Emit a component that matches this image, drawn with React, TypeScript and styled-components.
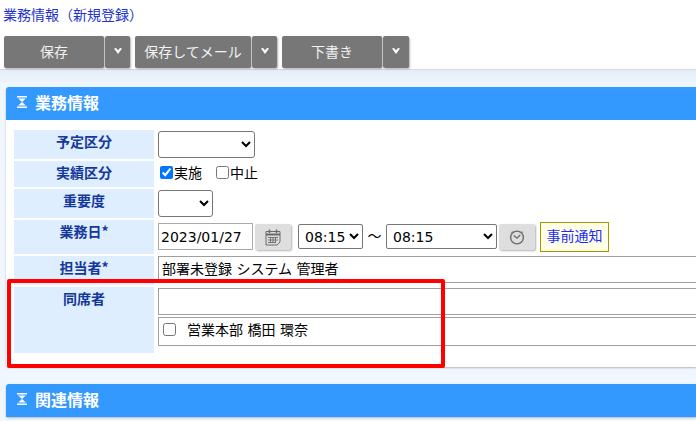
import React from "react";
import styled, { createGlobalStyle } from "styled-components";

const UI_FONT = `"DejaVu Sans", "Noto Sans CJK JP", sans-serif`;
const CJK_FONT = `"Noto Sans CJK JP", "Noto Sans", sans-serif`;

const Global = createGlobalStyle`
  html, body { margin: 0; padding: 0; background: #fff; }
  body { font-family: ${UI_FONT}; font-size: 14px; color: #000; overflow: hidden; }
  * { box-sizing: border-box; }
`;

const Page = styled.div`
  position: relative;
  width: 696px;
  height: 421px;
  overflow: hidden;
  display: flex;
  flex-direction: column;
`;
const Header = styled.header`
  height: 70px;
  flex: none;
  background: #fff;
  border-bottom: 1px solid #d8d8d8;
  padding: 4px 0 0 3px;
`;
const Crumb = styled.div`
  font-family: ${CJK_FONT};
  font-size: 14px;
  line-height: 20px;
  color: #2233cc;
  height: 32px;
`;
const Toolbar = styled.div`
  display: flex;
  gap: 5px;
  padding-left: 1px;
`;
const ButtonGroup = styled.div`
  display: flex;
  gap: 1px;
`;
const ToolButton = styled.button<{ $w: number }>`
  width: ${(p) => p.$w}px;
  height: 32px;
  border: 0;
  padding: 0 0 3px;
  border-radius: 2px;
  background: #777;
  color: #f2f2f2;
  font: 14px ${CJK_FONT};
  box-shadow: 1px 1px 2px rgba(0, 0, 0, 0.3);
  display: flex;
  align-items: center;
  justify-content: center;
`;
const Main = styled.main`
  flex: 1;
  background: linear-gradient(#e4edf7, #eff6fe 14px);
  padding: 17px 0 0 6px;
  display: flex;
  flex-direction: column;
  gap: 17px;
`;
const Panel = styled.section`
  background: #fff;
  border-radius: 3px 0 0 3px;
  box-shadow: 0 1px 2px rgba(0, 0, 0, 0.25);
`;
const PanelTitle = styled.h2`
  margin: 0;
  height: 33px;
  background: #3399ff;
  border-radius: 3px 0 0 0;
  color: #fff;
  font-family: ${CJK_FONT};
  font-size: 16px;
  font-weight: 700;
  display: flex;
  align-items: center;
  gap: 8px;
  padding: 0 0 4px 11px;
`;
const Form = styled.div`
  padding: 10px 0 14px 8px;
  display: flex;
  flex-direction: column;
  gap: 2px;
`;
const Row = styled.div<{ $h: number }>`
  display: flex;
  height: ${(p) => p.$h}px;
`;
const Label = styled.div`
  width: 140px;
  flex: none;
  background: #deeeff;
  color: #14389a;
  font-family: ${CJK_FONT};
  font-size: 14px;
  font-weight: 700;
  line-height: 20px;
  padding-top: 1px;
  text-align: center;
`;
const Value = styled.div`
  flex: 1;
  min-width: 0;
  padding-left: 4px;
  display: flex;
  align-items: flex-start;
`;
const Select = styled.select<{ $w: number }>`
  width: ${(p) => p.$w}px;
  height: 27px;
  margin-top: 1px;
  font: 14px ${UI_FONT};
  background: #fff;
  border: 1px solid #767676;
  border-radius: 3px;
  padding: 0 0 0 2px;
  color: #000;
`;
const Check = styled.label`
  display: flex;
  align-items: center;
  font-family: ${CJK_FONT};
  line-height: 20px;
  margin: 1px 12px 0 0;
  input { margin: 0 1px 0 2px; width: 13px; height: 13px; }
`;
const DateInput = styled.input`
  width: 95px;
  height: 27px;
  margin-top: 3px;
  border: 1px solid #aaa;
  padding: 0 2px;
  font: 14px ${UI_FONT};
`;
const IconButton = styled.button<{ $gap: number }>`
  width: 36px;
  height: 26px;
  margin: 4px 0 0 ${(p) => p.$gap}px;
  padding: 0;
  border: 0;
  border-radius: 2px;
  background: #dedede;
  box-shadow: 1px 1px 2px rgba(0, 0, 0, 0.3);
  display: flex;
  align-items: center;
  justify-content: center;
`;
const TimeSelect = styled(Select)<{ $gap?: number }>`
  margin: 4px 0 0 ${(p) => p.$gap ?? 0}px;
  height: 25px;
  border-radius: 2px;
`;
const Tilde = styled.span`
  width: 23px;
  margin-top: 3px;
  font-family: ${CJK_FONT};
  text-align: center;
  line-height: 24px;
`;
const Notice = styled.div`
  width: 69px;
  height: 30px;
  margin: 2px 0 0 5px;
  background: #ffffe8;
  border: 1px solid #a09a00;
  color: #1a2aff;
  font-family: ${CJK_FONT};
  font-size: 14px;
  line-height: 25px;
  text-align: center;
`;
const TextBox = styled.div<{ $h: number; $pb?: number }>`
  width: 100%;
  height: ${(p) => p.$h}px;
  border: 1px solid #a0a0a0;
  border-right: 0;
  padding: 0 0 ${(p) => p.$pb ?? 3}px 3px;
  white-space: pre;
  display: flex;
  align-items: center;
`;
const Stack = styled.div`
  flex: 1;
  min-width: 0;
  padding: 1px 0 0 4px;
  display: flex;
  flex-direction: column;
  gap: 2px;
`;
const Attendee = styled.input`
  margin: 0 11px 0 1px;
  width: 13px;
  height: 13px;
`;
const Highlight = styled.div`
  position: absolute;
  left: 7px;
  top: 279px;
  width: 438px;
  height: 89px;
  border: 4px solid #ff0000;
  border-radius: 2px;
  pointer-events: none;
`;

const Caret = () => (
  <svg width="8" height="6" viewBox="0 0 8 6"><path d="M0 0.6 2 0 4 2.2 6 0 8 .6 4 6z" fill="#fff" /></svg>
);
const Hourglass = () => (
  <svg width="10" height="12" viewBox="0 0 10 12"><path d="M0 0h10v1.6H0zM0 10.4h10V12H0zM1.2 2.6h7.6L5 6zM5 6l3.8 3.4H1.2z" fill="#fff" /></svg>
);
const Calendar = () => (
  <svg width="16" height="17" viewBox="0 0 16 17" fill="none" stroke="#6a6a6a">
    <path d="M1 2.5h14v10.5l-3 3H1z" />
    <path d="M1 5.5h14" strokeWidth="2" />
    <path d="M4.5 0.5v3.5M11.5 0.5v3.5" strokeWidth="1.5" />
    <path d="M3 8.5h10M3 11h10M3 13.5h8M5.5 8v6M8 8v6M10.5 8v6" strokeWidth="0.9" />
  </svg>
);
const Clock = () => (
  <svg width="16" height="16" viewBox="0 0 16 16" fill="none" stroke="#6a6a6a">
    <circle cx="8" cy="8.5" r="6.4" strokeWidth="1.4" />
    <path d="M3.4 2.4 2.2 3.6M12.6 2.4 13.8 3.6" strokeWidth="1" />
    <path d="M4.8 6.4 8 9.2l3.2-3.2" strokeWidth="1.3" />
  </svg>
);

const App = () => (
  <Page>
    <Global />
    <Header>
      <Crumb>業務情報（新規登録）</Crumb>
      <Toolbar>
        <ButtonGroup><ToolButton $w={100}>保存</ToolButton><ToolButton $w={25}><Caret /></ToolButton></ButtonGroup>
        <ButtonGroup><ToolButton $w={116}>保存してメール</ToolButton><ToolButton $w={25}><Caret /></ToolButton></ButtonGroup>
        <ButtonGroup><ToolButton $w={100}>下書き</ToolButton><ToolButton $w={26}><Caret /></ToolButton></ButtonGroup>
      </Toolbar>
    </Header>
    <Main>
      <Panel>
        <PanelTitle><Hourglass />業務情報</PanelTitle>
        <Form>
          <Row $h={29}><Label>予定区分</Label><Value><Select $w={97}><option></option></Select></Value></Row>
          <Row $h={26}><Label>実績区分</Label><Value>
            <Check><input type="checkbox" defaultChecked />実施</Check>
            <Check><input type="checkbox" />中止</Check>
          </Value></Row>
          <Row $h={29}><Label>重要度</Label><Value><Select $w={55}><option></option></Select></Value></Row>
          <Row $h={34}><Label>業務日*</Label><Value>
            <DateInput defaultValue="2023/01/27" />
            <IconButton $gap={2}><Calendar /></IconButton>
            <TimeSelect $w={65} $gap={7}><option>08:15</option></TimeSelect>
            <Tilde>～</Tilde>
            <TimeSelect $w={111}><option>08:15</option></TimeSelect>
            <IconButton $gap={2}><Clock /></IconButton>
            <Notice>事前通知</Notice>
          </Value></Row>
          <Row $h={29}><Label>担当者*</Label><Value><TextBox $h={27}>部署未登録 システム 管理者</TextBox></Value></Row>
          <Row $h={66}><Label>同席者</Label><Stack>
            <TextBox $h={27} />
            <TextBox $h={29} $pb={5}><Attendee type="checkbox" />営業本部 橋田 環奈</TextBox>
          </Stack></Row>
        </Form>
      </Panel>
      <Panel>
        <PanelTitle><Hourglass />関連情報</PanelTitle>
      </Panel>
    </Main>
    <Highlight />
  </Page>
);

export default App;
